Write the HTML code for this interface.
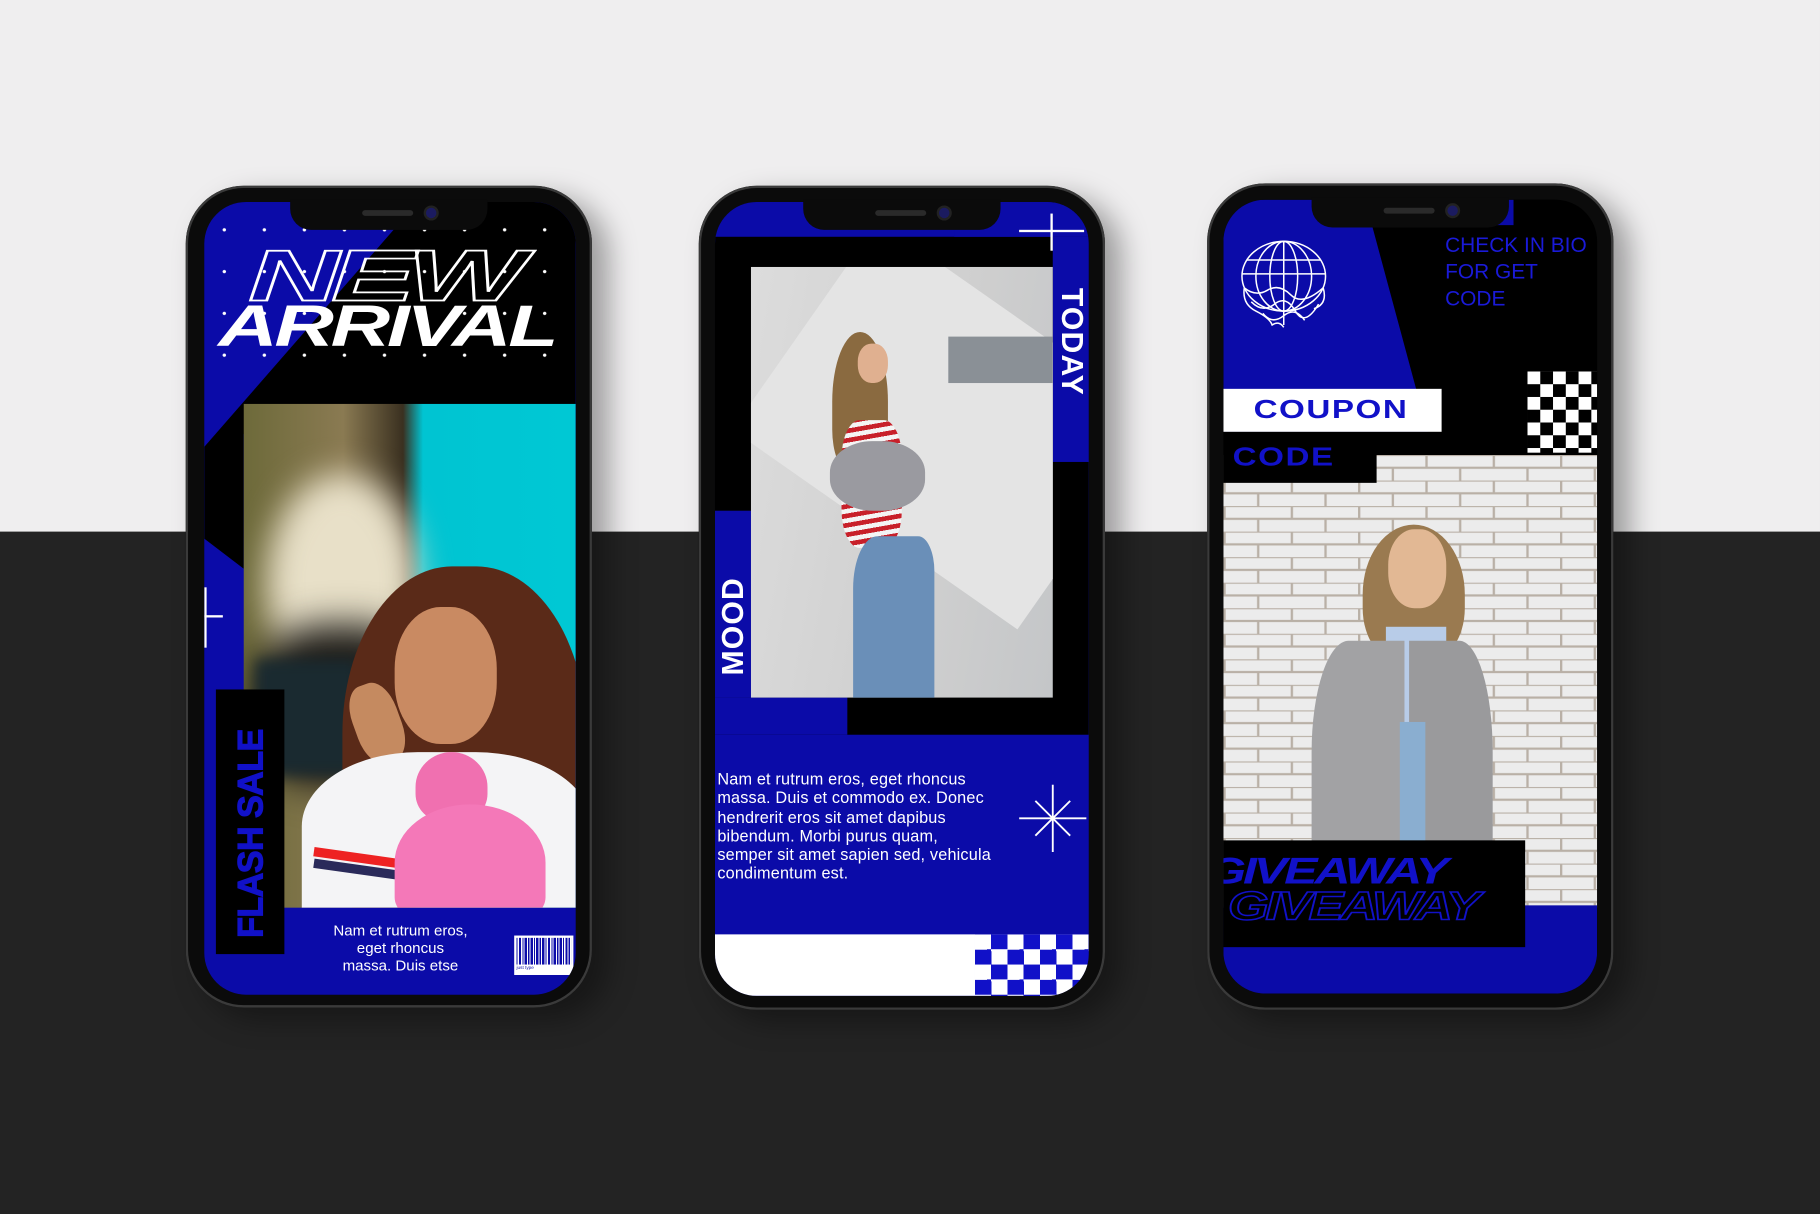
<!DOCTYPE html>
<html><head><meta charset="utf-8"><style>
*{margin:0;padding:0;box-sizing:border-box}
html,body{width:1820px;height:1214px;overflow:hidden;background:#232323}
#w{position:absolute;left:0;top:0;width:1568px;height:1046px;transform:scale(1.16071);transform-origin:0 0;font-family:"Liberation Sans",sans-serif}
.a{position:absolute}
.phone{position:absolute;background:#0b0b0b;border-radius:50px;box-shadow:0 0 0 2px #3a3a3a inset,14px 10px 24px rgba(0,0,0,.35)}
.scr{position:absolute;overflow:hidden;border-radius:36px;background:#0b0ba8}
.notch{position:absolute;background:#0b0b0b;border-radius:0 0 18px 18px}
.spk{position:absolute;background:#2a2a2a;border-radius:3px}
.cam{position:absolute;width:9px;height:9px;border-radius:50%;background:#1b1b60;box-shadow:0 0 0 2px #222}
.hv{font-weight:900;font-style:italic;transform-origin:0 0;white-space:nowrap}
</style></head><body>
<div id="w">
<div class="a" style="left:0;top:0;width:1568px;height:458px;background:#efeeef"></div>

<!-- PHONE 1 -->
<div class="phone" style="left:160px;top:160px;width:350px;height:708px"></div>
<div class="scr" style="left:176px;top:174px;width:320px;height:683px">
  <div class="a" style="left:0;top:0;width:320px;height:320px;background:#000;clip-path:polygon(184px 0,320px 0,320px 200px,34px 200px,34px 316px,0 290px,0 211px)"></div>
  <div class="a" style="left:0;top:6px;width:320px;height:150px;background:radial-gradient(circle,#fff 1.3px,transparent 1.6px) 0 0/34.5px 36px"></div>
  <div class="a hv" style="left:38px;top:34px;font-size:62px;line-height:62px;color:transparent;-webkit-text-stroke:1.5px #fff;transform:scaleX(1.75);letter-spacing:-4px">NEW</div>
  <div class="a hv" style="left:12px;top:82px;font-size:50px;line-height:50px;color:#fff;transform:scaleX(1.42);letter-spacing:-2px">ARRIVAL</div>
  <div class="a" style="left:34px;top:174px;width:286px;height:434px;overflow:hidden;background:linear-gradient(90deg,#6d6a3a 0,#8a7a52 30%,#3a3020 48%,#00c4d2 54%,#00c8d4 100%)">
    <div class="a" style="left:20px;top:60px;width:130px;height:190px;border-radius:50%;background:#e8e0c8;filter:blur(14px)"></div>
    <div class="a" style="left:10px;top:190px;width:150px;height:140px;border-radius:40%;background:#1e1c18;filter:blur(16px)"></div>
    <div class="a" style="left:10px;top:220px;width:90px;height:100px;background:#1a2a30;filter:blur(6px)"></div>
    <div class="a" style="left:85px;top:140px;width:210px;height:320px;border-radius:45% 45% 20% 20%;background:#5a2a18"></div>
    <div class="a" style="left:130px;top:175px;width:88px;height:118px;border-radius:45%;background:#c98a62"></div>
    <div class="a" style="left:95px;top:240px;width:40px;height:70px;border-radius:40%;background:#c58a60;transform:rotate(-20deg)"></div>
    <div class="a" style="left:50px;top:300px;width:250px;height:160px;border-radius:40% 40% 0 0;background:#f4f4f6"></div>
    <div class="a" style="left:60px;top:388px;width:90px;height:8px;background:#e22;transform:rotate(8deg)"></div>
    <div class="a" style="left:60px;top:398px;width:90px;height:8px;background:#2a2a5a;transform:rotate(8deg)"></div>
    <div class="a" style="left:148px;top:300px;width:62px;height:60px;border-radius:50% 50% 40% 40%;background:#f070b0"></div>
    <div class="a" style="left:130px;top:345px;width:130px;height:100px;border-radius:50% 50% 20% 20%;background:#f478b8"></div>
  </div>
  <div class="a" style="left:10px;top:420px;width:59px;height:228px;background:#000"></div>
  <div class="a" style="left:26px;top:634px;font-weight:bold;font-size:30px;line-height:30px;color:#1111c8;white-space:nowrap;transform:rotate(-90deg) scaleX(0.98);transform-origin:0 0;letter-spacing:-0.5px;-webkit-text-stroke:1px #1111c8">FLASH SALE</div>
  <div class="a" style="left:0;top:332px;width:2px;height:52px;background:#fff"></div>
  <div class="a" style="left:0;top:356px;width:16px;height:2px;background:#fff"></div>
  <div class="a" style="left:80px;top:620px;width:178px;text-align:center;color:#fff;font-size:13px;line-height:15px">Nam et rutrum eros,<br>eget rhoncus<br>massa. Duis etse</div>
  <div class="a" style="left:267px;top:632px;width:51px;height:34px;background:#fff;padding:2px">
    <div style="height:23px;background:repeating-linear-gradient(90deg,#0b0ba8 0 1px,#fff 1px 2px,#0b0ba8 2px 4px,#fff 4px 5px)"></div>
    <div style="font-size:4px;color:#0b0ba8">just type</div>
  </div>
</div>
<div class="notch" style="left:250px;top:172px;width:170px;height:26px"></div>
<div class="spk" style="left:312px;top:181px;width:44px;height:5px"></div>
<div class="cam" style="left:367px;top:179px"></div>

<!-- PHONE 2 -->
<div class="phone" style="left:602px;top:160px;width:350px;height:710px"></div>
<div class="scr" style="left:616px;top:174px;width:322px;height:684px">
  <div class="a" style="left:0;top:30px;width:322px;height:429px;background:#000"></div>
  <div class="a" style="left:206px;top:0;width:116px;height:30px;background:#0b0ba8"></div>
  <div class="a" style="left:291px;top:30px;width:31px;height:194px;background:#0b0ba8"></div>
  <div class="a" style="left:0;top:266px;width:31px;height:161px;background:#0b0ba8"></div>
  <div class="a" style="left:0;top:427px;width:114px;height:32px;background:#0b0ba8"></div>
  <div class="a" style="left:31px;top:56px;width:260px;height:371px;overflow:hidden;background:linear-gradient(100deg,#dcdcdc,#cfcfcf 60%,#c4c6c8)">
    <div class="a" style="left:110px;top:-40px;width:300px;height:220px;background:#e4e4e4;transform:rotate(35deg);transform-origin:0 0"></div>
    <div class="a" style="left:170px;top:60px;width:90px;height:40px;background:#8a9096"></div>
    <div class="a" style="left:70px;top:56px;width:48px;height:120px;border-radius:50% 50% 30% 30%;background:#8a6a40"></div>
    <div class="a" style="left:92px;top:66px;width:26px;height:34px;border-radius:45%;background:#e0b090"></div>
    <div class="a" style="left:78px;top:132px;width:52px;height:110px;border-radius:30%;background:repeating-linear-gradient(170deg,#c8202a 0 4px,#f4f4f4 4px 8px)"></div>
    <div class="a" style="left:68px;top:150px;width:82px;height:60px;border-radius:45%;background:#9a9aa0"></div>
    <div class="a" style="left:88px;top:232px;width:70px;height:150px;border-radius:30% 20% 0 0;background:#6a8fb8"></div>
  </div>
  <div class="a" style="left:322px;top:74px;transform:rotate(90deg);transform-origin:0 0;font-weight:900;font-size:26px;line-height:28px;color:#fff;white-space:nowrap;letter-spacing:1px">TODAY</div>
  <div class="a" style="left:1px;top:408px;transform:rotate(-90deg);transform-origin:0 0;font-weight:900;font-size:26px;line-height:28px;color:#fff;white-space:nowrap;letter-spacing:1px">MOOD</div>
  <div class="a" style="left:262px;top:24px;width:56px;height:2px;background:#fff"></div>
  <div class="a" style="left:289px;top:10px;width:2px;height:32px;background:#fff"></div>
  <svg class="a" style="left:262px;top:502px" width="58" height="58" viewBox="0 0 58 58"><g stroke="#fff" stroke-width="1.6"><line x1="29" y1="0" x2="29" y2="58"/><line x1="0" y1="29" x2="58" y2="29"/><line x1="14" y1="14" x2="44" y2="44"/><line x1="44" y1="14" x2="14" y2="44"/></g></svg>
  <div class="a" style="left:2px;top:489px;width:270px;color:#fff;font-size:14px;line-height:16.3px;white-space:nowrap;letter-spacing:0.15px">Nam et rutrum eros, eget rhoncus<br>massa. Duis et commodo ex. Donec<br>hendrerit eros sit amet dapibus<br>bibendum. Morbi purus quam,<br>semper sit amet sapien sed, vehicula<br>condimentum est.</div>
  <div class="a" style="left:0;top:631px;width:224px;height:53px;background:#fff"></div>
  <div class="a" style="left:224px;top:631px;width:98px;height:53px;background:repeating-conic-gradient(#1111c8 0 25%,#fff 0 50%) 0 0/28px 26px"></div>
</div>
<div class="notch" style="left:692px;top:172px;width:170px;height:26px"></div>
<div class="spk" style="left:754px;top:181px;width:44px;height:5px"></div>
<div class="cam" style="left:809px;top:179px"></div>

<!-- PHONE 3 -->
<div class="phone" style="left:1040px;top:158px;width:350px;height:712px"></div>
<div class="scr" style="left:1054px;top:172px;width:322px;height:684px;background:#000">
  <div class="a" style="left:0;top:0;width:322px;height:220px;background:#0b0ba8;clip-path:polygon(0 0,250px 0,250px 22px,128px 22px,176px 200px,0 200px)"></div>
  <svg class="a" style="left:12px;top:32px" width="80" height="80" viewBox="0 0 80 80"><g fill="none" stroke="#fff" stroke-width="1.3"><ellipse cx="40" cy="34" rx="36" ry="30"/><ellipse cx="40" cy="34" rx="24" ry="30"/><ellipse cx="40" cy="34" rx="12" ry="30"/><line x1="40" y1="4" x2="40" y2="76"/><path d="M8 20h64M4 32h72M6 44q10 8 20 2t20 4 28-6M12 56q10 10 20 2t18 6 20-6M22 66q8 10 18 2t18 4"/><path d="M6 44q-2 14 10 20t14 12q6-4 10 2M74 44q4 14-8 18"/></g></svg>
  <div class="a" style="left:191px;top:28px;color:#1a1ad8;font-size:18px;line-height:23px;white-space:nowrap">CHECK IN BIO<br>FOR GET<br>CODE</div>
  <div class="a" style="left:262px;top:148px;width:60px;height:70px;background:repeating-conic-gradient(#000 0 25%,#fff 0 50%) 0 0/22px 22px"></div>
  <div class="a" style="left:0;top:220px;width:322px;height:390px;overflow:hidden;background:#ededed">
    <svg width="322" height="390" class="a" style="left:0;top:0"><defs><pattern id="br" width="58" height="22" patternUnits="userSpaceOnUse"><rect width="58" height="22" fill="#ececec"/><g stroke="#b9b0a6" stroke-width="2"><line x1="0" y1="0" x2="58" y2="0"/><line x1="0" y1="11" x2="58" y2="11"/><line x1="1" y1="0" x2="1" y2="11"/><line x1="30" y1="11" x2="30" y2="22"/></g></pattern></defs><rect width="322" height="390" fill="url(#br)"/></svg>
    <div class="a" style="left:120px;top:60px;width:88px;height:120px;border-radius:50% 50% 40% 40%;background:#9a7a50"></div>
    <div class="a" style="left:142px;top:64px;width:50px;height:68px;border-radius:45%;background:#e2b894"></div>
    <div class="a" style="left:140px;top:148px;width:52px;height:160px;background:#b8cce8"></div>
    <div class="a" style="left:76px;top:160px;width:80px;height:240px;border-radius:40% 0 0 0;background:#a2a2a4"></div>
    <div class="a" style="left:160px;top:160px;width:72px;height:240px;border-radius:0 40% 0 0;background:#9a9a9c"></div>
    <div class="a" style="left:152px;top:230px;width:22px;height:160px;background:#8aaed0"></div>
  </div>
  <div class="a" style="left:0;top:163px;width:188px;height:37px;background:#fff"></div>
  <div class="a" style="left:26px;top:168px;font-weight:900;font-size:22px;line-height:26px;color:#1111c8;transform:scaleX(1.3);transform-origin:0 0;letter-spacing:1px">COUPON</div>
  <div class="a" style="left:0;top:202px;width:132px;height:42px;background:#000"></div>
  <div class="a" style="left:8px;top:209px;font-weight:900;font-size:22px;line-height:26px;color:#1111c8;transform:scaleX(1.3);transform-origin:0 0;letter-spacing:1px">CODE</div>
  <div class="a" style="left:0;top:608px;width:322px;height:76px;background:#0b0ba8"></div>
  <div class="a" style="left:0;top:552px;width:260px;height:92px;background:#000;overflow:hidden">
    <div class="a hv" style="left:-14px;top:10px;font-size:32px;line-height:32px;color:#1111c8;transform:scaleX(1.35);letter-spacing:-2px">GIVEAWAY</div>
    <div class="a hv" style="left:4px;top:40px;font-size:34px;line-height:34px;color:transparent;-webkit-text-stroke:1.3px #1111c8;transform:scaleX(1.32);letter-spacing:-2px">GIVEAWAY</div>
  </div>
</div>
<div class="notch" style="left:1130px;top:170px;width:170px;height:26px"></div>
<div class="spk" style="left:1192px;top:179px;width:44px;height:5px"></div>
<div class="cam" style="left:1247px;top:177px"></div>
</div>
</body></html>
